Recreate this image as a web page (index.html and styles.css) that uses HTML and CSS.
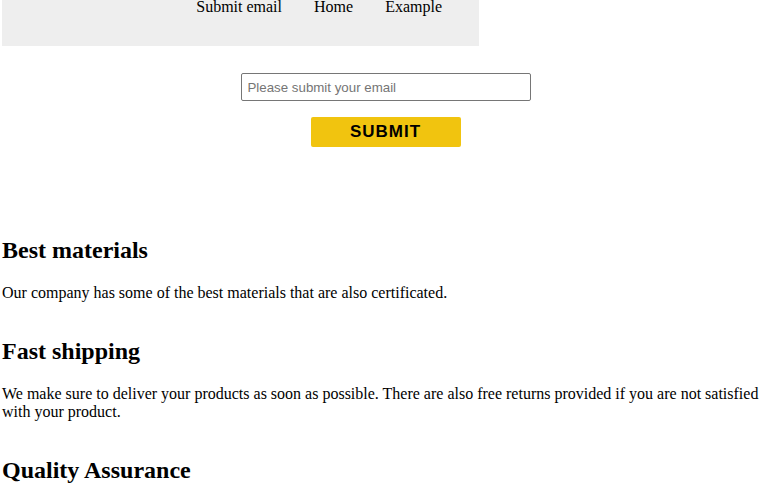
FILE: index.html
```html
<!DOCTYPE html>
<html lang="en">
<head>
<meta charset="utf-8">
<title>Company</title>
<link rel="stylesheet" href="styles.css">
</head>
<body>
<header class="top-bar">
  <nav class="nav">
    <a class="nav-link" href="#">Submit email</a>
    <a class="nav-link" href="#">Home</a>
    <a class="nav-link" href="#">Example</a>
  </nav>
</header>
<form class="email-form">
  <input class="email-input" type="email" placeholder="Please submit your email">
  <button class="submit-btn" type="button">SUBMIT</button>
</form>
<main class="features">
  <section class="feature">
    <h2>Best materials</h2>
    <p>Our company has some of the best materials that are also certificated.</p>
  </section>
  <section class="feature">
    <h2>Fast shipping</h2>
    <p>We make sure to deliver your products as soon as possible. There are also free returns provided if you are not satisfied with your product.</p>
  </section>
  <section class="feature">
    <h2>Quality Assurance</h2>
  </section>
</main>
</body>
</html>
```

FILE: styles.css
```css
html, body {
  margin: 0;
  padding: 0;
  background: #fff;
}
body {
  padding: 0 2px;
  font-family: "Liberation Serif", "Times New Roman", serif;
  font-size: 16px;
  color: #000;
}
.top-bar {
  width: 477px;
  height: 46px;
  background: #eeeeee;
  display: flex;
  justify-content: flex-end;
  padding-right: 37px;
  box-sizing: border-box;
}
.nav {
  display: flex;
  gap: 32px;
  line-height: 14px;
}
.nav-link {
  color: #000;
  text-decoration: none;
}
.email-form {
  display: flex;
  flex-direction: column;
  align-items: center;
  gap: 16px;
  margin: 27px 0 70px;
  padding-left: 4px;
}
.email-input {
  width: 290px;
  height: 28px;
  box-sizing: border-box;
  border: 1px solid #767676;
  border-radius: 2px;
  padding: 0 6px;
  font-family: "Liberation Sans", Arial, sans-serif;
  font-size: 13.3px;
  color: #000;
}
.email-input::placeholder {
  color: #757575;
}
.submit-btn {
  width: 150px;
  height: 30px;
  border: none;
  border-radius: 2px;
  background: #f1c40f;
  font-family: "Liberation Sans", Arial, sans-serif;
  font-weight: bold;
  font-size: 17px;
  letter-spacing: 1px;
  color: #000;
  padding: 0;
}
.feature {
  display: flow-root;
}
.feature h2 {
  font-size: 24px;
  margin: 20px 0;
}
.feature p {
  margin: 16px 0;
}
```
